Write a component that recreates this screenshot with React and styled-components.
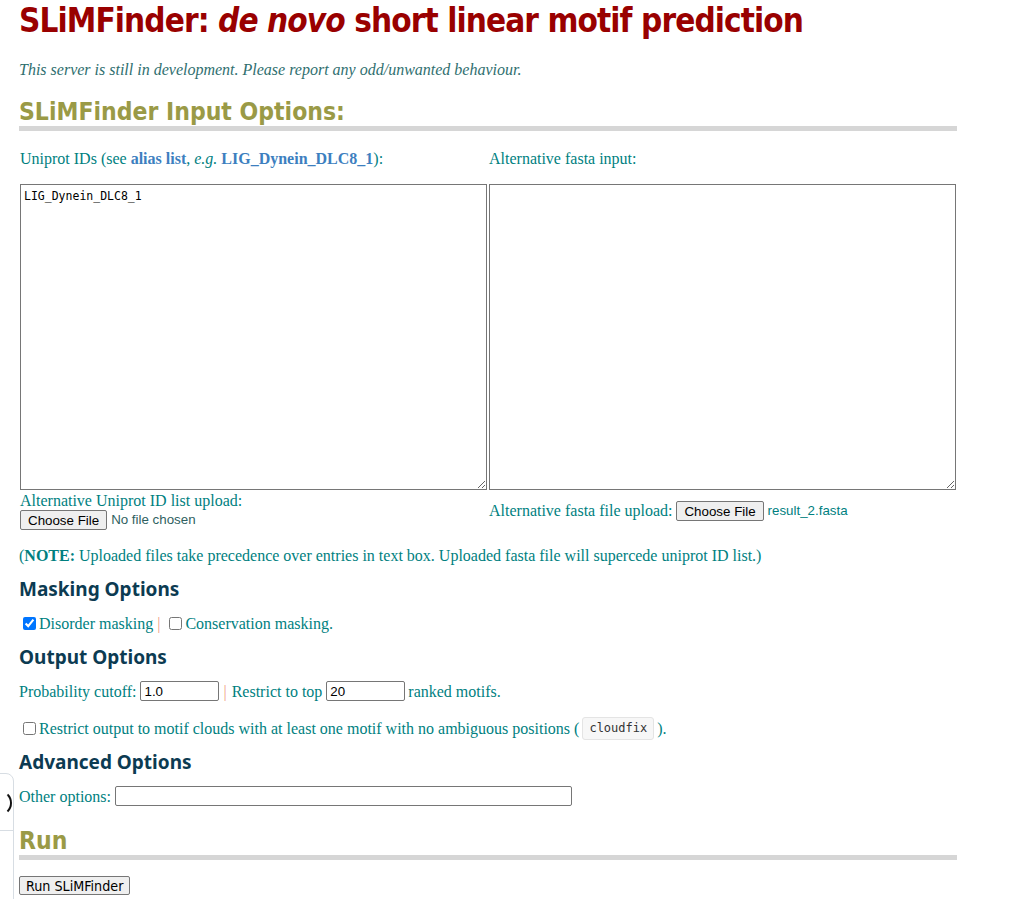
import React from "react";
import styled, { createGlobalStyle } from "styled-components";

const GlobalStyle = createGlobalStyle`
  html, body {
    margin: 0;
    padding: 0;
    background: #ffffff;
  }
  body {
    font-family: "Liberation Serif", "Times New Roman", serif;
    color: #007f7f;
    font-size: 16px;
  }
`;

const teal = "#007f7f";
const olive = "#9a9a46";
const navy = "#0c3b52";

const Page = styled.div`
  padding: 0 0 10px 19px;
  width: 938px;
`;

const Title = styled.h1`
  margin: 0;
  padding-top: 1px;
  font-family: "DejaVu Sans Condensed", "Liberation Sans Narrow", "Liberation Sans", sans-serif;
  font-weight: bold;
  font-size: 33px;
  line-height: 40px;
  color: #990000;
  letter-spacing: -0.9px;

  em {
    font-style: italic;
  }
`;

const Notice = styled.p`
  margin: 20px 0 0;
  font-style: italic;
  font-size: 16px;
  line-height: 18px;
  color: #2f6f6f;
`;

const SectionTitle = styled.h2`
  margin: ${(p) => p.top}px 0 0;
  font-family: "DejaVu Sans Condensed", "Noto Sans", sans-serif;
  font-weight: bold;
  font-size: 24.5px;
  line-height: 28px;
  color: ${olive};
  padding-bottom: 0;
  border-bottom: 5px solid #d6d6d6;
`;

const SubTitle = styled.h3`
  margin: ${(p) => p.top}px 0 0;
  font-family: "Noto Sans", "DejaVu Sans", sans-serif;
  font-weight: bold;
  font-size: 19px;
  line-height: 24px;
  color: ${navy};
`;

const Grid = styled.div`
  display: grid;
  grid-template-columns: 467px 467px;
  column-gap: 2px;
  margin-top: 19px;
  margin-left: 1px;
`;

const Label = styled.div`
  font-size: 16px;
  line-height: 18px;
  color: ${teal};
  padding-bottom: 16px;
`;

const Link = styled.a`
  color: #3d7fbf;
  font-weight: bold;
  text-decoration: none;
`;

const Area = styled.textarea`
  box-sizing: border-box;
  width: 467px;
  height: 306px;
  margin: 0;
  padding: 3px 3px;
  border: 1px solid #767676;
  border-radius: 0;
  font-family: "DejaVu Sans Mono", "Liberation Mono", monospace;
  font-size: 11.5px;
  line-height: 16px;
  color: #000;
  resize: both;
  display: block;
`;

const UploadCell = styled.div`
  display: flex;
  flex-direction: ${(p) => (p.row ? "row" : "column")};
  align-items: ${(p) => (p.row ? "center" : "flex-start")};
  align-self: start;
  padding-top: ${(p) => (p.row ? "11px" : "2px")};
  font-size: 16px;
  line-height: 18px;
  color: ${teal};
`;

const FileRow = styled.div`
  display: flex;
  align-items: center;
  margin-left: ${(p) => (p.inline ? "4px" : "0")};
`;

const FileButton = styled.button`
  box-sizing: border-box;
  font-family: "Liberation Sans", Arial, sans-serif;
  font-size: 13.33px;
  height: 20px;
  padding: 0 7px;
  background: #efefef;
  border: 1px solid #767676;
  border-radius: 2px;
  color: #000;
  line-height: 15px;
`;

const FileName = styled.span`
  font-family: "Liberation Sans", Arial, sans-serif;
  font-size: 13.33px;
  color: ${(p) => (p.chosen ? teal : "#2f5f5f")};
  margin-left: 4px;
`;

const Text = styled.p`
  margin: ${(p) => p.top}px 0 0;
  font-size: 16px;
  line-height: 19px;
  color: ${teal};
  display: flex;
  align-items: center;
  white-space: nowrap;
`;

const Pipe = styled.span`
  color: #f0a080;
  margin: 0 5px 0 4px;
`;

const Check = styled.input.attrs({ type: "checkbox" })`
  width: 13px;
  height: 13px;
  margin: 0 3px 0 4px;
  accent-color: #0075ff;
`;

const NumInput = styled.input`
  box-sizing: border-box;
  width: ${(p) => p.w}px;
  height: 20px;
  margin: 0 ${(p) => p.mr || 0}px 0 4px;
  padding: 1px 3px;
  border: 1px solid #767676;
  border-radius: 2px;
  font-family: "Liberation Sans", Arial, sans-serif;
  font-size: 13.33px;
  color: #000;
`;

const Code = styled.code`
  font-family: "DejaVu Sans Mono", "Liberation Mono", monospace;
  font-size: 12px;
  color: #333;
  background: #f7f7f7;
  border: 1px solid #e4e4e4;
  border-radius: 3px;
  padding: 1px 6px;
  margin: 0 3px 0 3px;
`;

const RunButton = styled.button`
  margin-top: 16px;
  height: 19px;
  padding: 0 6px;
  font-family: "DejaVu Sans Condensed", "Liberation Sans Narrow", "Liberation Sans", sans-serif;
  font-size: 14.2px;
  background: #efefef;
  border: 1px solid #767676;
  border-radius: 2px;
  color: #000;
`;

const SideWidget = styled.div`
  position: absolute;
  left: -40px;
  top: 773px;
  width: 54px;
  height: 140px;
  box-sizing: border-box;
  border: 1px solid #d7dde3;
  border-radius: 8px;
  background: #fff;
`;

const WidgetIcon = styled.div`
  position: absolute;
  right: 1px;
  top: 16px;
  width: 22px;
  height: 22px;
  border-radius: 50%;
  border: 2.5px solid transparent;
  border-right-color: #111;
`;

const WidgetDivider = styled.div`
  position: absolute;
  left: 0;
  right: 0;
  top: 56px;
  border-top: 1px solid #d7dde3;
`;

export default function App() {
  return (
    <>
      <GlobalStyle />
      <SideWidget>
        <WidgetIcon />
        <WidgetDivider />
      </SideWidget>
      <Page>
        <Title>
          SLiMFinder: <em>de novo</em> short linear motif prediction
        </Title>
        <Notice>
          This server is still in development. Please report any odd/unwanted behaviour.
        </Notice>

        <SectionTitle top={19}>SLiMFinder Input Options:</SectionTitle>

        <Grid>
          <Label>
            Uniprot IDs (see <Link href="#">alias list</Link>, <em>e.g.</em>{" "}
            <Link href="#">LIG_Dynein_DLC8_1</Link>):
          </Label>
          <Label>Alternative fasta input:</Label>
          <Area defaultValue="LIG_Dynein_DLC8_1" />
          <Area defaultValue="" />
          <UploadCell>
            Alternative Uniprot ID list upload:
            <FileRow>
              <FileButton>Choose File</FileButton>
              <FileName>No file chosen</FileName>
            </FileRow>
          </UploadCell>
          <UploadCell row>
            Alternative fasta file upload:
            <FileRow inline>
              <FileButton>Choose File</FileButton>
              <FileName chosen>result_2.fasta</FileName>
            </FileRow>
          </UploadCell>
        </Grid>

        <Text top={16}>
          <span>
            (<b>NOTE:</b> Uploaded files take precedence over entries in text box. Uploaded
            fasta file will supercede uniprot ID list.)
          </span>
        </Text>

        <SubTitle top={12}>Masking Options</SubTitle>
        <Text top={13}>
          <Check defaultChecked />
          Disorder masking<Pipe>|</Pipe>
          <Check />
          Conservation masking.
        </Text>

        <SubTitle top={12}>Output Options</SubTitle>
        <Text top={12}>
          Probability cutoff:
          <NumInput w={79} defaultValue="1.0" />
          <Pipe>|</Pipe>
          Restrict to top
          <NumInput w={79} mr={3} defaultValue="20" />
          ranked motifs.
        </Text>

        <Text top={16}>
          <Check />
          Restrict output to motif clouds with at least one motif with no ambiguous positions (
          <Code>cloudfix</Code>).
        </Text>

        <SubTitle top={10}>Advanced Options</SubTitle>
        <Text top={12}>
          Other options:
          <NumInput w={457} defaultValue="" />
        </Text>

        <SectionTitle top={21}>Run</SectionTitle>
        <RunButton>Run SLiMFinder</RunButton>
      </Page>
    </>
  );
}
